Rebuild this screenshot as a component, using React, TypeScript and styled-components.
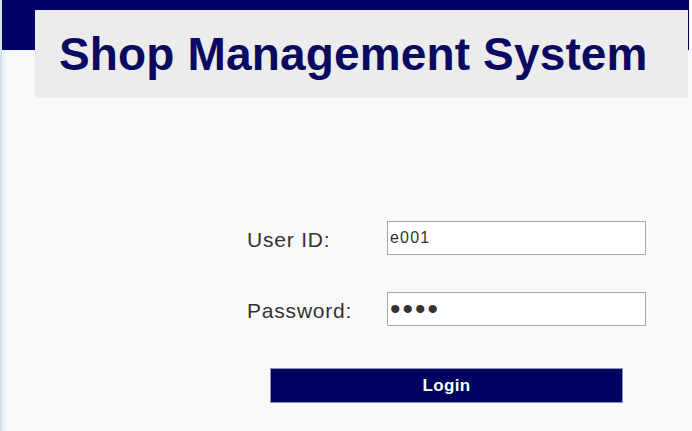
import React from "react";
import styled, { createGlobalStyle } from "styled-components";

const GlobalStyle = createGlobalStyle`
  html, body {
    margin: 0;
    padding: 0;
    background: #f9f9f9;
  }
  body {
    font-family: "Liberation Sans", Arial, sans-serif;
  }
`;

const Page = styled.div`
  min-height: 431px;
  box-sizing: border-box;
  background: #f9f9f9;
  border-left: 2px solid #d2e3ee;
  box-shadow: inset 3px 0 0 #eaf2f7;
`;

const Header = styled.header`
  margin-right: 3px;
  padding: 10px 1px 0 33px;
  background: linear-gradient(to bottom, #000066 0, #000066 50px, transparent 50px);
`;

const TitleBox = styled.div`
  background: #ececec;
  padding: 17px 24px;
`;

const Title = styled.h1`
  margin: 0;
  font-family: "Liberation Sans", Arial, sans-serif;
  font-weight: 700;
  font-size: 46px;
  line-height: 54px;
  letter-spacing: 0.15px;
  color: #0a0a60;
  white-space: nowrap;
`;

const LoginForm = styled.form`
  margin: 123px 0 0 245px;
  width: 399px;
`;

const Fields = styled.div`
  display: grid;
  grid-template-columns: 140px 259px;
  row-gap: 37px;
  align-items: center;
`;

const Label = styled.label`
  font-family: "Liberation Sans", Arial, sans-serif;
  font-size: 21px;
  letter-spacing: 0.8px;
  color: #333;
  padding-top: 4px;
`;

const Field = styled.input<{ $masked?: boolean }>`
  box-sizing: border-box;
  width: 259px;
  height: 34px;
  margin: 0;
  padding: 0 0 0 2px;
  border: 1px solid #a6a6a6;
  background: #fff;
  color: #333;
  font-family: "Liberation Sans", Arial, sans-serif;
  font-size: ${(p) => (p.$masked ? "30px" : "16px")};
  letter-spacing: ${(p) => (p.$masked ? "2px" : "1.2px")};
  outline: none;
`;

const SubmitButton = styled.button`
  display: block;
  box-sizing: border-box;
  width: 353px;
  height: 35px;
  margin: 42px 0 0 23px;
  padding: 0;
  background: #00025f;
  border: 1px solid #8696c0;
  color: #fff;
  font-family: "Liberation Sans", Arial, sans-serif;
  font-weight: 700;
  font-size: 17px;
  letter-spacing: 0.3px;
  cursor: pointer;
`;

export default function App() {
  return (
    <>
      <GlobalStyle />
      <Page>
        <Header>
          <TitleBox>
            <Title>Shop Management System</Title>
          </TitleBox>
        </Header>
        <LoginForm onSubmit={(e) => e.preventDefault()}>
          <Fields>
            <Label htmlFor="uid">User ID:</Label>
            <Field id="uid" type="text" defaultValue="e001" />
            <Label htmlFor="pwd">Password:</Label>
            <Field id="pwd" type="password" defaultValue="1234" $masked />
          </Fields>
          <SubmitButton type="submit">Login</SubmitButton>
        </LoginForm>
      </Page>
    </>
  );
}
